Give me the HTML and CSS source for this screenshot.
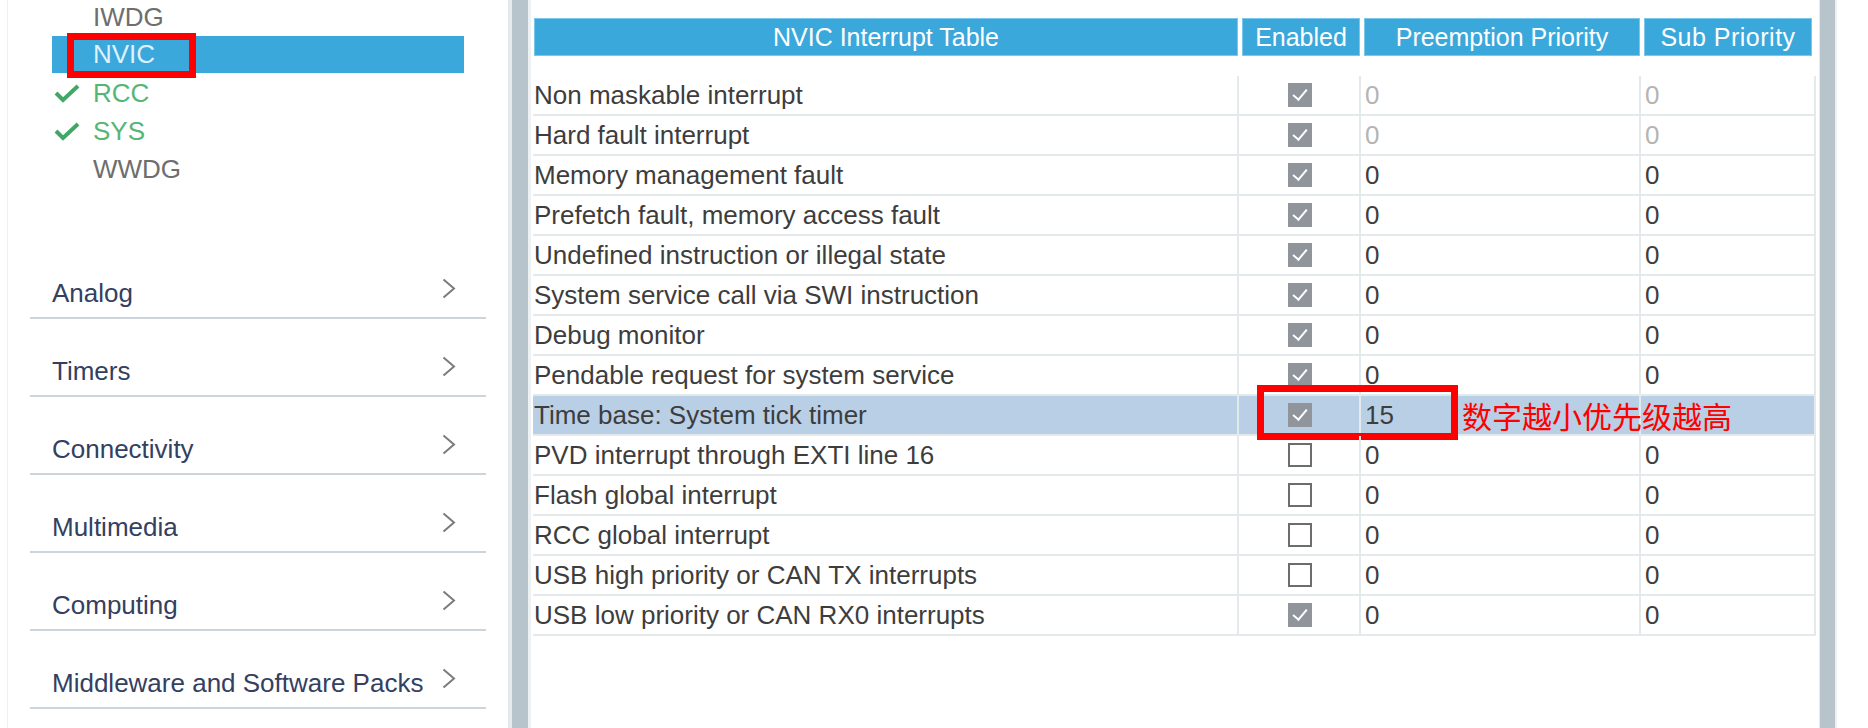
FILE: index.html
```html
<!DOCTYPE html>
<html>
<head>
<meta charset="utf-8">
<link rel="stylesheet" href="styles.css">
</head>
<body>
<div class="app">
  <aside class="side">
    <ul class="tree">
      <li class="item plain"><span class="ico"></span>IWDG</li>
      <li class="item sel"><span class="ico"></span>NVIC<span class="mark mark-nvic"></span></li>
      <li class="item ok"><svg class="ico" viewBox="0 0 26 20"><polyline points="2,10 9,17 24,3" fill="none" stroke="#3fa864" stroke-width="4"/></svg>RCC</li>
      <li class="item ok"><svg class="ico" viewBox="0 0 26 20"><polyline points="2,10 9,17 24,3" fill="none" stroke="#3fa864" stroke-width="4"/></svg>SYS</li>
      <li class="item plain"><span class="ico"></span>WWDG</li>
    </ul>
    <nav class="cats">
      <div class="cat"><span>Analog</span><svg class="chev" viewBox="0 0 14 21"><polyline points="1.5,1.5 12,10.5 1.5,19.5" fill="none" stroke="#7b7b7b" stroke-width="2"/></svg></div>
      <div class="cat"><span>Timers</span><svg class="chev" viewBox="0 0 14 21"><polyline points="1.5,1.5 12,10.5 1.5,19.5" fill="none" stroke="#7b7b7b" stroke-width="2"/></svg></div>
      <div class="cat"><span>Connectivity</span><svg class="chev" viewBox="0 0 14 21"><polyline points="1.5,1.5 12,10.5 1.5,19.5" fill="none" stroke="#7b7b7b" stroke-width="2"/></svg></div>
      <div class="cat"><span>Multimedia</span><svg class="chev" viewBox="0 0 14 21"><polyline points="1.5,1.5 12,10.5 1.5,19.5" fill="none" stroke="#7b7b7b" stroke-width="2"/></svg></div>
      <div class="cat"><span>Computing</span><svg class="chev" viewBox="0 0 14 21"><polyline points="1.5,1.5 12,10.5 1.5,19.5" fill="none" stroke="#7b7b7b" stroke-width="2"/></svg></div>
      <div class="cat"><span>Middleware and Software Packs</span><svg class="chev" viewBox="0 0 14 21"><polyline points="1.5,1.5 12,10.5 1.5,19.5" fill="none" stroke="#7b7b7b" stroke-width="2"/></svg></div>
    </nav>
  </aside>
  <div class="split"></div>
  <main class="content">
    <div class="thead">
      <div class="th th-name">NVIC Interrupt Table</div>
      <div class="th th-en">Enabled</div>
      <div class="th th-pre">Preemption Priority</div>
      <div class="th th-sub">Sub Priority</div>
    </div>
    <div class="tbody">
      <div class="row"><div class="td">Non maskable interrupt</div><div class="td c"><span class="cb on"></span></div><div class="td num dis">0</div><div class="td num dis">0</div></div>
      <div class="row"><div class="td">Hard fault interrupt</div><div class="td c"><span class="cb on"></span></div><div class="td num dis">0</div><div class="td num dis">0</div></div>
      <div class="row"><div class="td">Memory management fault</div><div class="td c"><span class="cb on"></span></div><div class="td num">0</div><div class="td num">0</div></div>
      <div class="row"><div class="td">Prefetch fault, memory access fault</div><div class="td c"><span class="cb on"></span></div><div class="td num">0</div><div class="td num">0</div></div>
      <div class="row"><div class="td">Undefined instruction or illegal state</div><div class="td c"><span class="cb on"></span></div><div class="td num">0</div><div class="td num">0</div></div>
      <div class="row"><div class="td">System service call via SWI instruction</div><div class="td c"><span class="cb on"></span></div><div class="td num">0</div><div class="td num">0</div></div>
      <div class="row"><div class="td">Debug monitor</div><div class="td c"><span class="cb on"></span></div><div class="td num">0</div><div class="td num">0</div></div>
      <div class="row"><div class="td">Pendable request for system service</div><div class="td c"><span class="cb on"></span></div><div class="td num">0</div><div class="td num">0</div></div>
      <div class="row hl"><div class="td">Time base: System tick timer</div><div class="td c"><span class="cb on"></span></div><div class="td num">15</div><div class="td num"></div><span class="mark mark-row"></span><span class="note">数字越小优先级越高</span></div>
      <div class="row"><div class="td">PVD interrupt through EXTI line 16</div><div class="td c"><span class="cb"></span></div><div class="td num">0</div><div class="td num">0</div></div>
      <div class="row"><div class="td">Flash global interrupt</div><div class="td c"><span class="cb"></span></div><div class="td num">0</div><div class="td num">0</div></div>
      <div class="row"><div class="td">RCC global interrupt</div><div class="td c"><span class="cb"></span></div><div class="td num">0</div><div class="td num">0</div></div>
      <div class="row"><div class="td">USB high priority or CAN TX interrupts</div><div class="td c"><span class="cb"></span></div><div class="td num">0</div><div class="td num">0</div></div>
      <div class="row"><div class="td">USB low priority or CAN RX0 interrupts</div><div class="td c"><span class="cb on"></span></div><div class="td num">0</div><div class="td num">0</div></div>
    </div>
  </main>
  <div class="split split-r"></div>
  <div class="tail"></div>
</div>
</body>
</html>
```

FILE: styles.css
```css
* { box-sizing: border-box; }
html, body { margin: 0; padding: 0; background: #fff; }
body {
  font-family: "Liberation Sans", Arial, "Noto Sans CJK SC", sans-serif;
  width: 1868px;
  height: 728px;
  overflow: hidden;
}
.app {
  display: flex;
  height: 728px;
}

/* ---------- left side ---------- */
.side {
  width: 502px;
  margin-left: 7px;
  border-left: 1px solid #edf0f2;
  border-right: 1px solid #e3e8eb;
  flex: none;
}
.tree {
  list-style: none;
  margin: -2px 0 0 0;
  padding: 0;
}
.item {
  position: relative;
  display: flex;
  align-items: center;
  height: 38px;
  width: 412px;
  margin-left: 44px;
  padding-left: 2px;
  font-size: 26px;
  color: #6e6e6e;
}
.ico {
  display: inline-block;
  width: 26px;
  height: 20px;
  margin-right: 13px;
  flex: none;
}
.item.sel {
  background: #3aa8db;
  color: #dff1fb;
  height: 37px;
  margin-bottom: 1px;
}
.item.ok { color: #55b676; }
.mark {
  position: absolute;
  border: 7px solid #ff0000;
}
.mark-nvic {
  left: 15px;
  top: -3px;
  width: 129px;
  height: 45px;
}

.cats {
  margin-top: 53px;
  margin-left: 22px;
  width: 456px;
}
.cat {
  display: flex;
  align-items: flex-end;
  justify-content: space-between;
  height: 78px;
  padding: 0 30px 9px 22px;
  border-bottom: 2px solid #cdd5dc;
  font-size: 26px;
  line-height: 30px;
  color: #34405f;
}
.chev {
  width: 14px;
  height: 21px;
  margin-bottom: 9px;
  flex: none;
}

/* ---------- splitters ---------- */
.split {
  width: 22px;
  flex: none;
  background: #b8c4cb;
  border-left: 3px solid #e6eaed;
  border-right: 3px solid #eef1f3;
}
.split-r {
  width: 18px;
  border-left: 1px solid #e6eaed;
  border-right: 2px solid #eef1f3;
}
.tail { flex: 1; }

/* ---------- content ---------- */
.content {
  width: 1288px;
  flex: none;
  padding-top: 18px;
}
.thead {
  display: flex;
  gap: 4px;
  margin-left: 3px;
  height: 38px;
}
.th {
  background: #3aa8db;
  border: 1px solid #7cc7ec;
  color: #ffffff;
  font-size: 25px;
  display: flex;
  align-items: center;
  justify-content: center;
}
.th-name { width: 704px; }
.th-en { width: 118px; }
.th-pre { width: 276px; }
.th-sub { width: 168px; letter-spacing: 0.5px; }

.tbody {
  margin-top: 20px;
  margin-left: 2px;
  width: 1283px;
}
.row {
  position: relative;
  display: grid;
  grid-template-columns: 706px 122px 280px 175px;
  height: 40px;
  border-bottom: 2px solid #e4e9ec;
  font-size: 26px;
  color: #3d3d3d;
}
.row.hl { background: #b9cfe5; }
.td {
  display: flex;
  align-items: center;
  padding-left: 1px;
  border-right: 2px solid #e4e9ec;
  white-space: nowrap;
}
.td.c { justify-content: center; padding-left: 0; }
.td.num { padding-left: 4px; }
.td.dis { color: #b4b4b4; }

.cb {
  width: 24px;
  height: 24px;
  border: 2px solid #6d6d6d;
  background: #fff;
  position: relative;
  margin-left: 2px;
}
.cb.on {
  border: none;
  background: #8f959b;
}
.cb.on::after {
  content: "";
  position: absolute;
  left: 8px;
  top: 3px;
  width: 6px;
  height: 12px;
  border-right: 2px solid #fff;
  border-bottom: 2px solid #fff;
  transform: rotate(40deg);
}

.mark-row {
  left: 724px;
  top: -11px;
  width: 201px;
  height: 55px;
}
.note {
  position: absolute;
  left: 929px;
  top: 2px;
  font-family: "Noto Sans CJK SC", sans-serif;
  font-size: 30px;
  line-height: 34px;
  color: #ff0000;
  white-space: nowrap;
}
```
